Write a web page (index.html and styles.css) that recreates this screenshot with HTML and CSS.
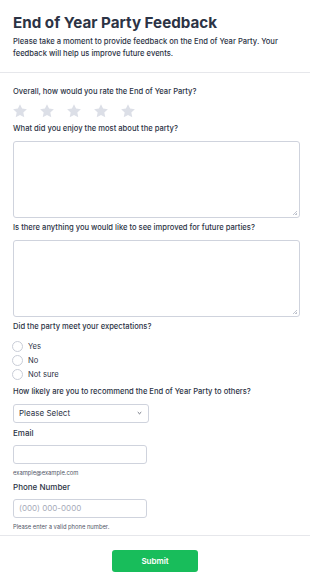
FILE: index.html
```html
<!DOCTYPE html>
<html lang="en">
<head>
<meta charset="utf-8">
<title>End of Year Party Feedback</title>
<link rel="stylesheet" href="styles.css">
</head>
<body>
<div class="page">
  <header class="header">
    <h1 class="title">End of Year Party Feedback</h1>
    <p class="desc">Please take a moment to provide feedback on the End of Year Party. Your feedback will help us improve future events.</p>
  </header>
  <form class="form">
    <div class="field">
      <div class="label label-first">Overall, how would you rate the End of Year Party?</div>
      <div class="stars">
        <svg class="star" viewBox="0 0 24 24"><path d="M12 1.8l3.1 6.6 7.2.9-5.3 5 1.4 7.1L12 17.9l-6.4 3.5 1.4-7.1-5.3-5 7.2-.9z"/></svg>
        <svg class="star" viewBox="0 0 24 24"><path d="M12 1.8l3.1 6.6 7.2.9-5.3 5 1.4 7.1L12 17.9l-6.4 3.5 1.4-7.1-5.3-5 7.2-.9z"/></svg>
        <svg class="star" viewBox="0 0 24 24"><path d="M12 1.8l3.1 6.6 7.2.9-5.3 5 1.4 7.1L12 17.9l-6.4 3.5 1.4-7.1-5.3-5 7.2-.9z"/></svg>
        <svg class="star" viewBox="0 0 24 24"><path d="M12 1.8l3.1 6.6 7.2.9-5.3 5 1.4 7.1L12 17.9l-6.4 3.5 1.4-7.1-5.3-5 7.2-.9z"/></svg>
        <svg class="star" viewBox="0 0 24 24"><path d="M12 1.8l3.1 6.6 7.2.9-5.3 5 1.4 7.1L12 17.9l-6.4 3.5 1.4-7.1-5.3-5 7.2-.9z"/></svg>
      </div>
    </div>
    <div class="field">
      <div class="label">What did you enjoy the most about the party?</div>
      <div class="textarea"></div>
    </div>
    <div class="field">
      <div class="label">Is there anything you would like to see improved for future parties?</div>
      <div class="textarea"></div>
    </div>
    <div class="field">
      <div class="label">Did the party meet your expectations?</div>
      <div class="radios">
        <label class="radio"><span class="circle"></span>Yes</label>
        <label class="radio"><span class="circle"></span>No</label>
        <label class="radio"><span class="circle"></span>Not sure</label>
      </div>
    </div>
    <div class="field">
      <div class="label">How likely are you to recommend the End of Year Party to others?</div>
      <div class="select">
        <span>Please Select</span>
        <svg class="chev" viewBox="0 0 10 6"><path d="M1.5 1.2L5 4.6l3.5-3.4"/></svg>
      </div>
    </div>
    <div class="field">
      <div class="label label-lg">Email</div>
      <div class="input"></div>
      <div class="help">example@example.com</div>
    </div>
    <div class="field field-last">
      <div class="label label-lg">Phone Number</div>
      <div class="input"><span class="ph">(000) 000-0000</span></div>
      <div class="help">Please enter a valid phone number.</div>
    </div>
  </form>
  <div class="footer">
    <button type="button" class="submit">Submit</button>
  </div>
</div>
</body>
</html>
```

FILE: styles.css
```css
* { box-sizing: border-box; }
html, body { margin: 0; padding: 0; background: #fff; }
body {
  font-family: Inter, "Noto Sans", sans-serif;
  color: #2c3345;
}
.header {
  padding: 12px 13px 12px;
  border-bottom: 1px solid #e6e7eb;
}
.title {
  margin: 0;
  font-size: 15.2px;
  line-height: 22px;
  font-weight: 700;
  color: #2c3345;
}
.desc {
  margin: 2px 0 0;
  font-size: 7.6px;
  line-height: 12px;
  font-weight: 500;
  color: #2c3345;
}
.form {
  padding: 14px 10px 4px 13px;
  border-bottom: 1px solid #e6e7eb;
}
.field { margin-bottom: 5px; }
.field-last { margin-bottom: 0; }
.label {
  font-size: 7.6px;
  line-height: 10px;
  font-weight: 500;
  color: #2c3345;
  margin-bottom: 7px;
}
.label-first { margin-bottom: 6px; }
.label-lg { font-size: 8px; }
.stars { display: flex; gap: 11px; margin-left: -1px; }
.star { width: 16px; height: 16px; fill: #dcdfe7; }
.textarea {
  position: relative;
  width: 100%;
  height: 77px;
  border: 1px solid #cfd3dd;
  border-radius: 3px;
}
.textarea::after {
  content: "";
  position: absolute;
  right: 2px;
  bottom: 2px;
  width: 4px;
  height: 4px;
  background: linear-gradient(135deg, transparent 45%, #c2c6d0 45%, #c2c6d0 58%, transparent 58%, transparent 75%, #c2c6d0 75%);
}
.radios { display: flex; flex-direction: column; }
.radio {
  display: flex;
  align-items: center;
  height: 14.3px;
  font-size: 7.6px;
  color: #2c3345;
  gap: 5px;
}
.circle {
  width: 11px;
  height: 11px;
  border: 1px solid #c9cdd7;
  border-radius: 50%;
  margin-left: -1px;
}
.select {
  width: 136px;
  height: 19px;
  border: 1px solid #cfd3dd;
  border-radius: 3px;
  display: flex;
  align-items: center;
  justify-content: space-between;
  padding: 0 6px 0 5px;
  font-size: 8px;
  color: #2c3345;
}
.chev { width: 5px; height: 4px; fill: none; stroke: #2c3345; stroke-width: 1.4; }
.input {
  width: 134px;
  height: 19px;
  border: 1px solid #cfd3dd;
  border-radius: 3px;
  display: flex;
  align-items: center;
  padding: 0 5px;
  font-size: 8px;
}
.ph { color: #a6abb8; }
.help {
  font-size: 5.8px;
  line-height: 8px;
  margin-top: 5px;
  color: #505565;
}
.footer {
  display: flex;
  justify-content: center;
  padding: 14px 0 20px;
}
.submit {
  width: 86px;
  height: 22px;
  border: none;
  border-radius: 3px;
  background: #18bd5b;
  color: #fff;
  font-family: Inter, sans-serif;
  font-size: 8px;
  font-weight: 600;
}
```
